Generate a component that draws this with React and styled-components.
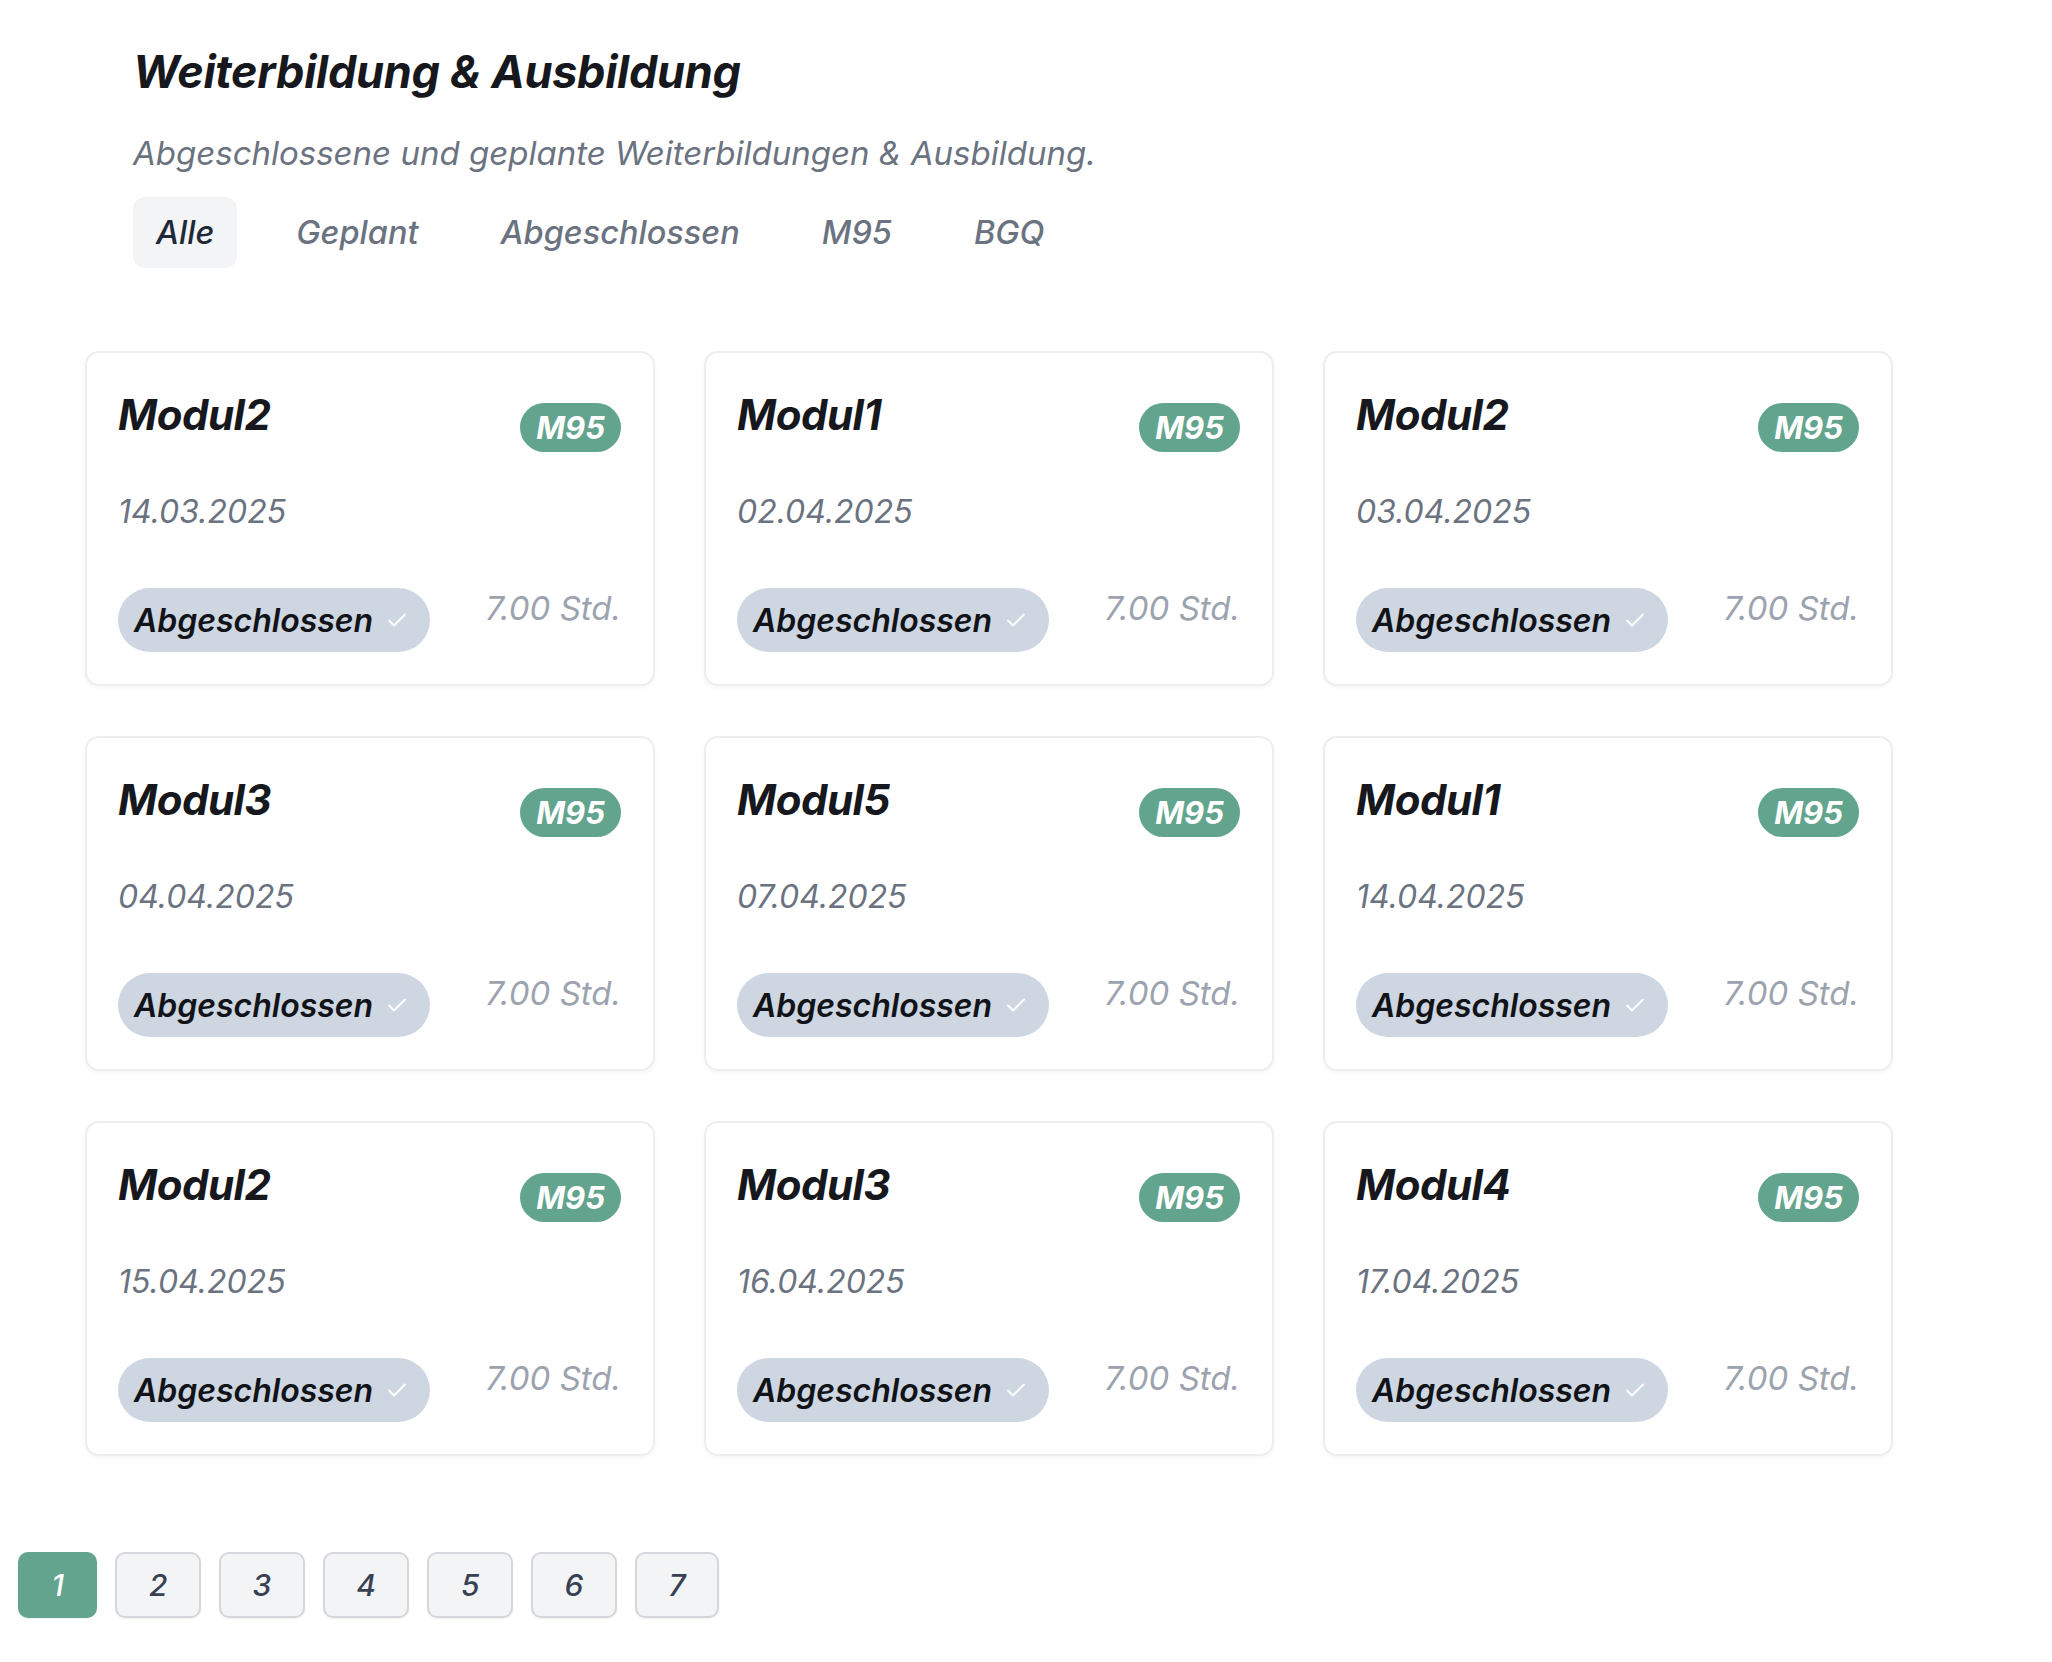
import React from 'react';
import styled, { createGlobalStyle } from 'styled-components';

const GlobalStyle = createGlobalStyle`
  body {
    margin: 0;
    background: #ffffff;
    font-family: Inter, "Noto Sans", sans-serif;
    font-style: italic;
  }
`

const courses = [
  { name: 'Modul2', date: '14.03.2025' },
  { name: 'Modul1', date: '02.04.2025' },
  { name: 'Modul2', date: '03.04.2025' },
  { name: 'Modul3', date: '04.04.2025' },
  { name: 'Modul5', date: '07.04.2025' },
  { name: 'Modul1', date: '14.04.2025' },
  { name: 'Modul2', date: '15.04.2025' },
  { name: 'Modul3', date: '16.04.2025' },
  { name: 'Modul4', date: '17.04.2025' },
]

const tabs = ['Alle', 'Geplant', 'Abgeschlossen', 'M95', 'BGQ']
const pages = [1, 2, 3, 4, 5, 6, 7]

const Check = () => (
  <svg width="24" height="24" viewBox="0 0 24 24" fill="none" stroke="#ffffff" strokeWidth="2" strokeLinecap="round" strokeLinejoin="round">
    <path d="M4 12.5l5 5L20 6.5" />
  </svg>
)

const App = () => {
  return (
    <Page>
      <GlobalStyle />
      <Header>
        <Title>Weiterbildung &amp; Ausbildung</Title>
        <Subtitle>Abgeschlossene und geplante Weiterbildungen &amp; Ausbildung.</Subtitle>
        <Tabs>
          {tabs.map((t, i) => (
            <Tab key={t} active={i === 0}>{t}</Tab>
          ))}
        </Tabs>
      </Header>
      <Grid>
        {courses.map((c, i) => (
          <Card key={i}>
            <CardHead>
              <CardTitle>{c.name}</CardTitle>
              <Badge>M95</Badge>
            </CardHead>
            <DateText>{c.date}</DateText>
            <CardFoot>
              <Status>
                Abgeschlossen
                <Check />
              </Status>
              <Hours>7.00 Std.</Hours>
            </CardFoot>
          </Card>
        ))}
      </Grid>
      <Pagination>
        {pages.map(p => (
          <PageButton key={p} active={p === 1}>{p}</PageButton>
        ))}
      </Pagination>
    </Page>
  )
}

const Page = styled.div`
  width: 2052px;
  min-height: 1662px;
  padding-top: 47px;
  box-sizing: border-box;
`

const Header = styled.div`
  padding-left: 133px;
`

const Title = styled.h1`
  margin: 0;
  font-size: 45px;
  line-height: 50px;
  font-weight: 700;
  color: #16181d;
  letter-spacing: -0.3px;
`

const Subtitle = styled.p`
  margin: 34px 0 0;
  font-size: 33px;
  line-height: 44px;
  font-weight: 400;
  color: #6b7280;
`

const Tabs = styled.div`
  display: flex;
  gap: 36px;
  margin-top: 22px;
`

const Tab = styled.div`
  height: 71px;
  padding: 0 23px;
  display: flex;
  align-items: center;
  border-radius: 12px;
  font-size: 32.5px;
  font-weight: 500;
  color: ${p => (p.active ? '#1f2937' : '#6b7280')};
  background: ${p => (p.active ? '#f3f4f6' : 'transparent')};
`

const Grid = styled.div`
  display: grid;
  grid-template-columns: repeat(3, 570px);
  column-gap: 49px;
  row-gap: 50px;
  margin: 83px 0 0 85px;
`

const Card = styled.div`
  height: 335px;
  box-sizing: border-box;
  padding: 37px 32px 32px 31px;
  border: 2px solid #eceef1;
  border-radius: 14px;
  background: #ffffff;
  box-shadow: 0 2px 4px rgba(0, 0, 0, 0.04);
  display: flex;
  flex-direction: column;
`

const CardHead = styled.div`
  display: flex;
  justify-content: space-between;
  align-items: flex-start;
`

const CardTitle = styled.div`
  font-size: 42px;
  line-height: 50px;
  font-weight: 700;
  color: #16181d;
  letter-spacing: -0.5px;
`

const Badge = styled.div`
  margin-top: 13px;
  height: 49px;
  padding: 0 16px;
  display: flex;
  align-items: center;
  border-radius: 25px;
  background: #62a48d;
  color: #ffffff;
  font-size: 31px;
  font-weight: 700;
`

const DateText = styled.div`
  margin-top: 40px;
  font-size: 32px;
  line-height: 40px;
  color: #6b7280;
`

const CardFoot = styled.div`
  margin-top: auto;
  display: flex;
  justify-content: space-between;
  align-items: flex-start;
`

const Status = styled.div`
  height: 64px;
  padding: 0 21px 0 16px;
  display: flex;
  align-items: center;
  gap: 12px;
  border-radius: 32px;
  background: #cdd6e1;
  color: #111318;
  font-size: 32px;
  font-weight: 600;
`

const Hours = styled.div`
  font-size: 33px;
  line-height: 40px;
  color: #9ca3af;
`

const Pagination = styled.div`
  display: flex;
  gap: 18px;
  margin: 96px 0 0 18px;
`

const PageButton = styled.div`
  height: 66px;
  padding: 0 31.5px;
  box-sizing: border-box;
  display: flex;
  align-items: center;
  border-radius: 10px;
  font-size: 30px;
  font-weight: 500;
  border: 2px solid ${p => (p.active ? '#62a48d' : '#d4d7dc')};
  background: ${p => (p.active ? '#62a48d' : '#f3f4f6')};
  color: ${p => (p.active ? '#ffffff' : '#374151')};
  box-shadow: 0 1px 2px rgba(0, 0, 0, 0.06);
`

export default App
